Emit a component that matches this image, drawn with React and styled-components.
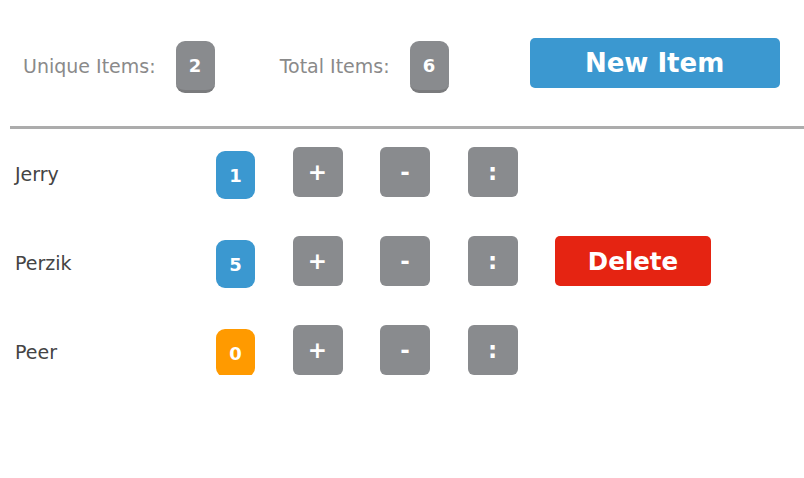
import styled, { createGlobalStyle } from 'styled-components'

const GlobalStyle = createGlobalStyle`
  body {
    margin: 0;
    background: #fff;
    font-family: "DejaVu Sans", Verdana, sans-serif;
  }
`

const Page = styled.div`
  width: 804px;
  padding: 38px 0 0 10px;
  box-sizing: border-box;
`

const Header = styled.div`
  display: flex;
  align-items: center;
  height: 56px;
  padding-left: 13px;
`

const Stat = styled.div`
  display: flex;
  align-items: center;
  gap: 20px;
  margin-right: ${(props) => props.space || '0'};
`

const Label = styled.span`
  font-size: 19px;
  color: #8a8a8a;
`

const Badge = styled.span`
  display: flex;
  align-items: center;
  justify-content: center;
  width: 39px;
  height: ${(props) => (props.raised ? '49px' : '48px')};
  border-radius: 9px;
  background: ${(props) => props.color || '#898b8e'};
  border-bottom: ${(props) => (props.raised ? '3px solid #7a7b7d' : 'none')};
  box-sizing: content-box;
  color: #fff;
  font-weight: bold;
  font-size: 18px;
  margin-top: ${(props) => (props.raised ? '2px' : '6px')};
`

const NewButton = styled.button`
  width: 250px;
  height: 50px;
  border: none;
  border-radius: 5px;
  background: #3b98d0;
  color: #fff;
  font-family: inherit;
  font-weight: bold;
  font-size: 26px;
  margin-top: -6px;
`

const Rule = styled.hr`
  margin: 32px 0 0 0;
  border: none;
  height: 3px;
  background: #acacac;
`

const List = styled.div`
  display: flex;
  flex-direction: column;
  gap: 39px;
  padding: 18px 0 0 5px;
`

const Row = styled.div`
  display: flex;
  align-items: center;
  height: 50px;
`

const Name = styled.span`
  width: 201px;
  font-size: 19px;
  color: #444;
  padding-top: 4px;
`

const Controls = styled.div`
  display: flex;
  align-items: center;
  gap: 37.5px;
`

const Square = styled.button`
  width: 50px;
  height: 50px;
  border: none;
  border-radius: 6px;
  background: #898b8e;
  color: #fff;
  font-family: inherit;
  font-weight: bold;
  font-size: 23px;
  padding: 0;
`

const DeleteButton = styled.button`
  width: 156px;
  height: 50px;
  border: none;
  border-radius: 5px;
  background: #e52412;
  color: #fff;
  font-family: inherit;
  font-weight: bold;
  font-size: 24.5px;
`

const items = [
  { name: 'Jerry', count: 1 },
  { name: 'Perzik', count: 5, del: true },
  { name: 'Peer', count: 0 },
]

export default function App() {
  return (
    <Page>
      <GlobalStyle />
      <Header>
        <Stat space="65px">
          <Label>Unique Items:</Label>
          <Badge raised>2</Badge>
        </Stat>
        <Stat space="81px">
          <Label>Total Items:</Label>
          <Badge raised>6</Badge>
        </Stat>
        <NewButton>New Item</NewButton>
      </Header>
      <Rule />
      <List>
        {items.map((it) => (
          <Row key={it.name}>
            <Name>{it.name}</Name>
            <Controls>
              <Badge color={it.count === 0 ? '#ff9a00' : '#3b98d0'}>{it.count}</Badge>
              <Square>+</Square>
              <Square>-</Square>
              <Square>:</Square>
              {it.del && <DeleteButton>Delete</DeleteButton>}
            </Controls>
          </Row>
        ))}
      </List>
    </Page>
  )
}
